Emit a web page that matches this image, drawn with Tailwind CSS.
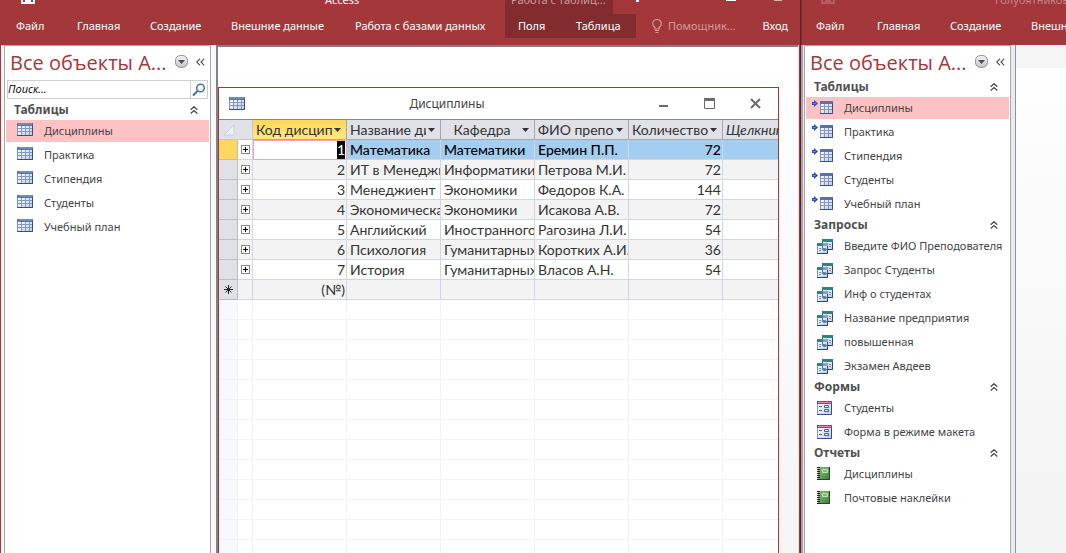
<!DOCTYPE html>
<html lang="ru">
<head>
<meta charset="utf-8">
<title>Access</title>
<script src="https://cdn.jsdelivr.net/npm/@tailwindcss/browser@4"></script>
</head>
<body class="h-screen overflow-hidden bg-white font-['Noto_Sans','Open_Sans',sans-serif] text-[11px] text-[#444]">
<svg class="absolute size-0" aria-hidden="true">
  <defs>
    <linearGradient id="sheet" x1="0" y1="0" x2="1" y2="1"><stop offset="0" stop-color="#fff"/><stop offset="1" stop-color="#bccbec"/></linearGradient>
    <linearGradient id="book" x1="0" y1="0" x2="1" y2="1"><stop offset="0" stop-color="#8cc47c"/><stop offset="1" stop-color="#3b7a3c"/></linearGradient>
    <linearGradient id="knob" x1="0" y1="0" x2="0" y2="1"><stop offset="0" stop-color="#f4f4f6"/><stop offset="1" stop-color="#c3c5cc"/></linearGradient>
  </defs>
  <symbol id="table" viewBox="0 0 16 13"><rect width="16" height="13" fill="#8497c0"/><rect width="16" height="3" fill="#5672b0"/><path d="M1 1h14" stroke="#8ca3d3"/><path fill="url(#sheet)" d="M1 3h3v2H1zM5 3h3v2H5zM9 3h3v2H9zM13 3h2v2h-2zM1 6h3v2H1zM5 6h3v2H5zM9 6h3v2H9zM13 6h2v2h-2zM1 9h3v3H1zM5 9h3v3H5zM9 9h3v3H9zM13 9h2v3h-2z"/><path d="M0 12.5h15.5V2" fill="none" stroke="#3a4f7e"/></symbol>
  <symbol id="linked" viewBox="0 0 22 16"><path d="M0 4h2V2l4 3.500L2 9V7H0z" fill="#2350c4"/><path d="M1 5.500h3" stroke="#5d88ea"/><g transform="translate(8 3)"><rect width="13" height="13" fill="#8497c0"/><rect width="13" height="3" fill="#5672b0"/><path fill="url(#sheet)" d="M1 3h3v2H1zM5 3h3v2H5zM9 3h3v2H9zM1 6h3v2H1zM5 6h3v2H5zM9 6h3v2H9zM1 9h3v3H1zM5 9h3v3H5zM9 9h3v3H9z"/><path d="M0 12.500h12.500V2" fill="none" stroke="#3a4f7e"/></g></symbol>
  <symbol id="query" viewBox="0 0 16 15"><rect x="5.500" y=".5" width="10" height="10" fill="url(#sheet)" stroke="#7f9ab5"/><path d="M5 0h11v3H5z" fill="#2f8288"/><path d="M12 5.500h2M12 7.500h2" stroke="#6f8fc0"/><path d="M6 10.500h9.500V3" fill="none" stroke="#2b4672"/><rect x=".5" y="4.500" width="10" height="10" fill="url(#sheet)" stroke="#7f9ab5"/><path d="M0 4h5v3H0z" fill="#2f8288"/><path d="M5 4h6v3H5z" fill="#73aeb4"/><path d="M2 9.500h2M6 9.500h3M2 11.500h2M6 11.500h3" stroke="#6f8fc0"/><path d="M0 14.500h10.500V7" fill="none" stroke="#2b4672"/><path d="M5.500 3v7.500H11" fill="none" stroke="#4c7894"/></symbol>
  <symbol id="form" viewBox="0 0 15 14"><rect x=".5" y=".5" width="14" height="13" fill="url(#sheet)" stroke="#8ba0cd"/><path d="M0 0h15v3H0z" fill="#b83263"/><path d="M1 1.500h13" stroke="#e58aae"/><path d="M2 5.500h3M2 9.500h3" stroke="#47619a"/><path d="M7.500 4.500h4v2h-4zM7.500 8.500h4v2h-4z" fill="#fff" stroke="#47619a"/><path d="M0 13.500h14.500V3" fill="none" stroke="#3a4f7e"/></symbol>
  <symbol id="report" viewBox="0 0 13 13"><rect x="1" width="12" height="13" fill="url(#book)"/><path d="M12.500 0v12.500H2" fill="none" stroke="#1e4a22"/><path d="M1.500 0v13" stroke="#222" stroke-dasharray="1 1" stroke-width="3"/><path d="M5.500 2.500h5v3h-5z" fill="#7db770" stroke="#c3e4ba"/></symbol>
  <symbol id="fold" viewBox="0 0 8 8"><path d="M.7 3.700 4 .7l3.300 3M.7 7.500 4 4.500l3.300 3" fill="none" stroke="#444" stroke-width="1.200"/></symbol>
  <symbol id="knobicon" viewBox="0 0 13 13"><rect x=".5" y=".5" width="12" height="12" rx="5" fill="url(#knob)" stroke="#8e9099"/><path d="M3 5h7L6.500 9z" fill="#494d62"/></symbol>
  <symbol id="collapse" viewBox="0 0 9 8"><path d="M4 .7.800 4 4 7.300M8.200.7 5 4l3.200 3.300" fill="none" stroke="#555" stroke-width="1.200"/></symbol>
  <symbol id="save" viewBox="0 0 14 12"><path d="M1 0h12v11H1z" fill="none" stroke="currentColor" stroke-width="2"/><path d="M4 7h6v5H4z" fill="currentColor"/></symbol>
</svg>

<div class="flex h-full">
  <!-- Active window -->
  <section class="flex min-w-0 flex-1 flex-col border-r border-[#54272b] bg-[#f8f8f9]">
    <header class="h-[45px] shrink-0 overflow-hidden bg-[#a4373a] text-[11px] text-white">
      <div class="flex h-3.5 overflow-hidden">
        <div class="flex w-[505px] items-end pb-1.5">
          <svg class="mb-1 ml-[21px] h-3 w-3.5 shrink-0"><use href="#save"/></svg>
          <h1 class="ml-[290px] leading-4">Access</h1>
        </div>
        <div class="flex w-[108px] items-end bg-[#832c2f] pb-1.5 pl-1.5 leading-4 whitespace-nowrap text-[#cf9c9e]">Работа с таблиц...</div>
        <div class="flex flex-1 items-start pl-[23px]"><i class="h-0.5 w-[3px] bg-white"></i><i class="ml-[87px] h-px w-2.5 bg-white"></i><i class="ml-[38px] h-px w-2 bg-white/60"></i></div>
      </div>
      <nav class="flex h-6 items-center whitespace-nowrap">
        <button class="w-[61px] pl-4 text-left">Файл</button>
        <button class="w-[73px] pl-4 text-left">Главная</button>
        <button class="w-[81px] pl-4 text-left">Создание</button>
        <button class="w-[124px] pl-4 text-left">Внешние данные</button>
        <button class="w-[166px] pl-4 text-left">Работа с базами данных</button>
        <div class="flex h-6 w-[131px] bg-[#832c2f]">
          <button class="w-[58px] pl-[13px] text-left">Поля</button>
          <button class="flex-1 pl-[13px] text-left">Таблица</button>
        </div>
        <button class="ml-4 flex items-center gap-1.5 text-[#d29a9c]">
          <svg class="h-3.5 w-2.5" viewBox="0 0 10 14" fill="none" stroke="currentColor"><path d="M3 10V8.500C1.500 7.500.700 6.300.700 4.800a4.300 4.300 0 0 1 8.600 0c0 1.500-.8 2.700-2.300 3.700V10zM3 11.500h4M3.500 13.500h3" stroke-width="1.200"/></svg>
          Помощник...
        </button>
        <button class="mr-3 ml-auto">Вход</button>
      </nav>
    </header>

    <div class="flex min-h-0 flex-1 border-l border-[#a4373a]">
      <aside class="mr-0.5 ml-[3px] w-[207px] shrink-0 border border-b-0 border-[#a5a8b3] bg-white px-px">
        <div class="flex h-8 items-start">
          <h2 class="w-[169px] pl-1 font-['Open_Sans'] text-xl leading-[34px] whitespace-nowrap text-[#a4373a]">Все объекты A...</h2>
          <button class="mt-[9px]" aria-label="Категории"><svg class="size-[13px]"><use href="#knobicon"/></svg></button>
          <button class="mt-3 ml-2" aria-label="Свернуть"><svg class="h-2 w-[9px]"><use href="#collapse"/></svg></button>
        </div>
        <form class="mx-px my-0.5 flex h-[19px] border border-[#cfcfcf]">
          <input aria-label="Поиск" value="Поиск..." class="min-w-0 flex-1 font-['Open_Sans'] text-[11px] text-black italic outline-none">
          <button type="button" class="flex w-[17px] items-center justify-center border-l border-[#cfcfcf]" aria-label="Найти"><svg class="size-3.5" viewBox="0 0 14 14" fill="none" stroke="#3c78b5"><circle cx="8.500" cy="5" r="3.800" stroke-width="1.500"/><path d="M5.500 8 1 12.500" stroke-width="2.200"/></svg></button>
        </form>
        <button class="flex h-[18px] w-full items-center justify-between pr-[11px] pl-2 text-xs font-bold text-[#505050]">Таблицы<svg class="size-2"><use href="#fold"/></svg></button>
        <ul>
          <li class="h-6 py-px"><button class="flex h-[22px] w-full items-center gap-[11px] bg-[#fdc2c3] pl-[11px]"><svg class="mb-1 h-[13px] w-4"><use href="#table"/></svg>Дисциплины</button></li>
          <li class="h-6 py-px"><button class="flex h-[22px] w-full items-center gap-[11px] pl-[11px]"><svg class="mb-1 h-[13px] w-4"><use href="#table"/></svg>Практика</button></li>
          <li class="h-6 py-px"><button class="flex h-[22px] w-full items-center gap-[11px] pl-[11px]"><svg class="mb-1 h-[13px] w-4"><use href="#table"/></svg>Стипендия</button></li>
          <li class="h-6 py-px"><button class="flex h-[22px] w-full items-center gap-[11px] pl-[11px]"><svg class="mb-1 h-[13px] w-4"><use href="#table"/></svg>Студенты</button></li>
          <li class="h-6 py-px"><button class="flex h-[22px] w-full items-center gap-[11px] pl-[11px]"><svg class="mb-1 h-[13px] w-4"><use href="#table"/></svg>Учебный план</button></li>
        </ul>
      </aside>

      <main class="ml-[3px] min-w-0 flex-1 overflow-hidden border-t-2 border-l-2 border-[#828285] bg-linear-to-b from-white to-[#f5f5f5] pt-10">
        <article class="mr-[19px] h-[120%] overflow-hidden border border-[#a4373a] bg-white">
          <div class="flex h-8 items-center border-b border-[#85888c] pl-2.5">
            <svg class="h-[13px] w-4"><use href="#table"/></svg>
            <h3 class="flex-1 text-center text-xs">Дисциплины</h3>
            <div class="flex w-[129px] justify-end gap-[35px] pr-[17px]">
              <button aria-label="Свернуть окно"><svg class="h-[11px] w-[11px]" viewBox="0 0 11 11"><path d="M1 7h9v2H1z" fill="#6b6b6b"/></svg></button>
              <button aria-label="Развернуть окно"><svg class="h-[11px] w-[11px]" viewBox="0 0 11 11"><path d="M.5 1v9.500h10V1" fill="none" stroke="#6b6b6b"/><path d="M0 0h11v3H0z" fill="#6b6b6b"/></svg></button>
              <button aria-label="Закрыть окно"><svg class="h-[11px] w-[11px]" viewBox="0 0 11 11"><path d="m1 1 9 9M10 1l-9 9" stroke="#6b6b6b" stroke-width="2"/></svg></button>
            </div>
          </div>
          <table class="w-full table-fixed border-separate border-spacing-0 font-['Lato','Open_Sans'] text-sm leading-[19px] whitespace-nowrap text-[#333]">
            <colgroup><col class="w-[19px]"><col class="w-[15px]"><col class="w-[94px]"><col class="w-[94px]"><col class="w-[94px]"><col class="w-[94px]"><col class="w-[94px]"><col></colgroup>
            <thead id="head"></thead>
            <tbody id="rows"></tbody>
          </table>
        </article>
      </main>
      <div class="w-0.5 shrink-0 border-r border-[#a4373a] bg-[#e4e4e8]"></div>
    </div>
  </section>

  <!-- Background window -->
  <section class="flex w-[265px] shrink-0 flex-col overflow-hidden">
    <header class="h-[45px] shrink-0 overflow-hidden border-l border-[#7c2f33] bg-[#a4373a] text-[11px] text-white">
      <div class="flex h-3.5 items-end overflow-hidden pb-1.5 text-[#c98285]">
        <svg class="mb-1 ml-[19px] h-3 w-3.5 shrink-0 opacity-50"><use href="#save"/></svg>
        <h1 class="ml-[160px] leading-4">Голубятников</h1>
      </div>
      <nav class="flex h-6 items-center whitespace-nowrap">
        <button class="w-[61px] shrink-0 pl-3.5 text-left">Файл</button>
        <button class="w-[73px] shrink-0 pl-3.5 text-left">Главная</button>
        <button class="w-[81px] shrink-0 pl-3.5 text-left">Создание</button>
        <button class="w-[124px] shrink-0 pl-3.5 text-left">Внешние данные</button>
      </nav>
    </header>
    <div class="flex min-h-0 flex-1 border-l-2 border-[#aaa3a6] bg-[#e9ebef]">
      <aside class="ml-px w-[207px] shrink-0 border border-b-0 border-[#a5a8b3] bg-white px-px">
        <div class="flex h-8 items-start">
          <h2 class="w-[169px] pl-1 font-['Open_Sans'] text-xl leading-[34px] whitespace-nowrap text-[#a4373a]">Все объекты A...</h2>
          <button class="mt-[9px]" aria-label="Категории"><svg class="size-[13px]"><use href="#knobicon"/></svg></button>
          <button class="mt-3 ml-2" aria-label="Свернуть"><svg class="h-2 w-[9px]"><use href="#collapse"/></svg></button>
        </div>
        <div id="objects"></div>
      </aside>
      <div class="ml-1 flex-1 border-l border-[#8f939b] bg-linear-to-b from-white to-[#f3f3f3]"><div class="h-[23px] bg-[#f5f5f5]"></div></div>
    </div>
  </section>
</div>

<script>
const groups = [
  ['Таблицы', 'linked', ['Дисциплины', 'Практика', 'Стипендия', 'Студенты', 'Учебный план']],
  ['Запросы', 'query', ['Введите ФИО Преподователя', 'Запрос Студенты', 'Инф о студентах', 'Название предприятия', 'повышенная', 'Экзамен Авдеев']],
  ['Формы', 'form', ['Студенты', 'Форма в режиме макета']],
  ['Отчеты', 'report', ['Дисциплины', 'Почтовые наклейки']],
];
const iconBox = {
  linked: 'mb-1 ml-[6px] mr-[10px] h-4 w-[22px]',
  query: 'ml-[11px] mr-[11px] h-[15px] w-4',
  form: 'ml-[11px] mr-3 h-3.5 w-[15px]',
  report: 'mb-px ml-[11px] mr-3.5 h-[13px] w-[13px]',
};
document.getElementById('objects').innerHTML = groups.map(([title, icon, items]) => `
  <button class="flex h-[18px] w-full items-center justify-between pr-[11px] pl-2 text-xs font-bold text-[#505050]">${title}<svg class="size-2"><use href="#fold"/></svg></button>
  <ul>${items.map((name, i) => `<li class="h-6 py-px"><button class="flex h-[22px] w-full items-center whitespace-nowrap ${icon === 'linked' && i === 0 ? 'bg-[#fdc2c3]' : ''}"><svg class="shrink-0 ${iconBox[icon]}"><use href="#${icon}"/></svg>${name}</button></li>`).join('')}</ul>`).join('');

const headings = ['Код дисцип', 'Название дис', 'Кафедра', 'ФИО препо', 'Количество'];
document.getElementById('head').innerHTML = `<tr class="h-5 bg-[#dfe1e6]">
  <th colspan="2" class="h-5 border-r border-b border-[#c3c7ce] p-0"><svg class="ml-1 h-3 w-3" viewBox="0 0 12 12"><path d="M11 1v10H1z" fill="#edf1f8" stroke="#c8d0e0"/></svg></th>
  ${headings.map((h, i) => `<th class="h-5 border-r border-b border-[#a4a8b0] p-0 font-normal ${i === 0 ? 'bg-linear-to-b from-[#ffd65a] to-[#ffe97c]' : ''}"><button class="flex h-[19px] w-full items-center pr-[5px] pl-[3px]"><span class="min-w-0 flex-1 overflow-hidden ${i === 2 ? 'text-center' : 'text-left'}">${h}</span><svg class="ml-0.5 h-1 w-[7px] shrink-0" viewBox="0 0 7 4"><path d="M0 0h7L3.500 4z" fill="#333"/></svg></button></th>`).join('')}
  <th class="h-5 overflow-hidden border-b border-[#a4a8b0] p-0 pl-[3px] text-left font-normal italic">Щелкните</th></tr>`;

const data = [
  ['1', 'Математика', 'Математики', 'Еремин П.П.', '72'],
  ['2', 'ИТ в Менеджм', 'Информатики', 'Петрова М.И.', '72'],
  ['3', 'Менеджиент', 'Экономики', 'Федоров К.А.', '144'],
  ['4', 'Экономическа', 'Экономики', 'Исакова А.В.', '72'],
  ['5', 'Английский', 'Иностранного', 'Рагозина Л.И.', '54'],
  ['6', 'Психология', 'Гуманитарных', 'Коротких А.И.', '36'],
  ['7', 'История', 'Гуманитарных', 'Власов А.Н.', '54'],
  ['(№)', '', '', '', ''],
];
const plus = '<button class="mx-auto flex size-[9px] items-center justify-center border border-[#888] bg-white" aria-label="Развернуть"><svg class="size-[5px]" viewBox="0 0 5 5"><path d="M0 2.500h5M2.500 0v5" stroke="#000"/></svg></button>';
const star = '<svg class="mx-auto size-[9px]" viewBox="0 0 9 9"><path d="M0 4.500h9M4.500 0v9M1.500 1.500l6 6M7.500 1.500l-6 6" stroke="#222"/></svg>';
const filled = data.map((row, r) => {
  const tone = r === 0 ? 'bg-[#a4cef0] font-medium text-black' : r % 2 ? 'bg-[#f3f3f3]' : 'bg-white';
  return `<tr class="${tone}">
    <td class="h-5 border-r border-b border-[#b9bdc4] p-0 ${r === 0 ? 'bg-[#ffd75f]' : 'bg-[#dfe1e6]'}">${r === 7 ? star : ''}</td>
    <td class="h-5 border-r border-b border-[#cfd6e6] p-0 ${r === 0 ? 'bg-white' : ''}">${r < 7 ? plus : ''}</td>
    ${row.map((v, c) => `<td class="h-5 overflow-hidden p-0 ${r === 0 && c === 0 ? 'border border-[#faa5a7] bg-white leading-[18px]' : 'border-r border-b border-[#cfd6e6]'} ${c === 0 || c === 4 ? 'pr-px text-right' : 'pl-[3px]'}">${r === 0 && c === 0 ? '<span class="inline-block bg-black align-top leading-[18px] text-white">1</span>' : v}</td>`).join('')}
    <td class="h-5 border-b border-[#cfd6e6] p-0"></td></tr>`;
});
const blank = `<tr><td class="h-5 border-r border-b border-[#f2f2f8] bg-[#f8f8ff] p-0"></td><td class="h-5 border-r border-b border-[#f2f2f8] p-0"></td>${'<td class="h-5 border-r border-b border-[#f2f2f8] p-0"></td>'.repeat(5)}<td class="h-5 border-b border-[#f2f2f8] p-0"></td></tr>`;
document.getElementById('rows').innerHTML = filled.join('') + blank.repeat(40);
</script>
</body>
</html>
